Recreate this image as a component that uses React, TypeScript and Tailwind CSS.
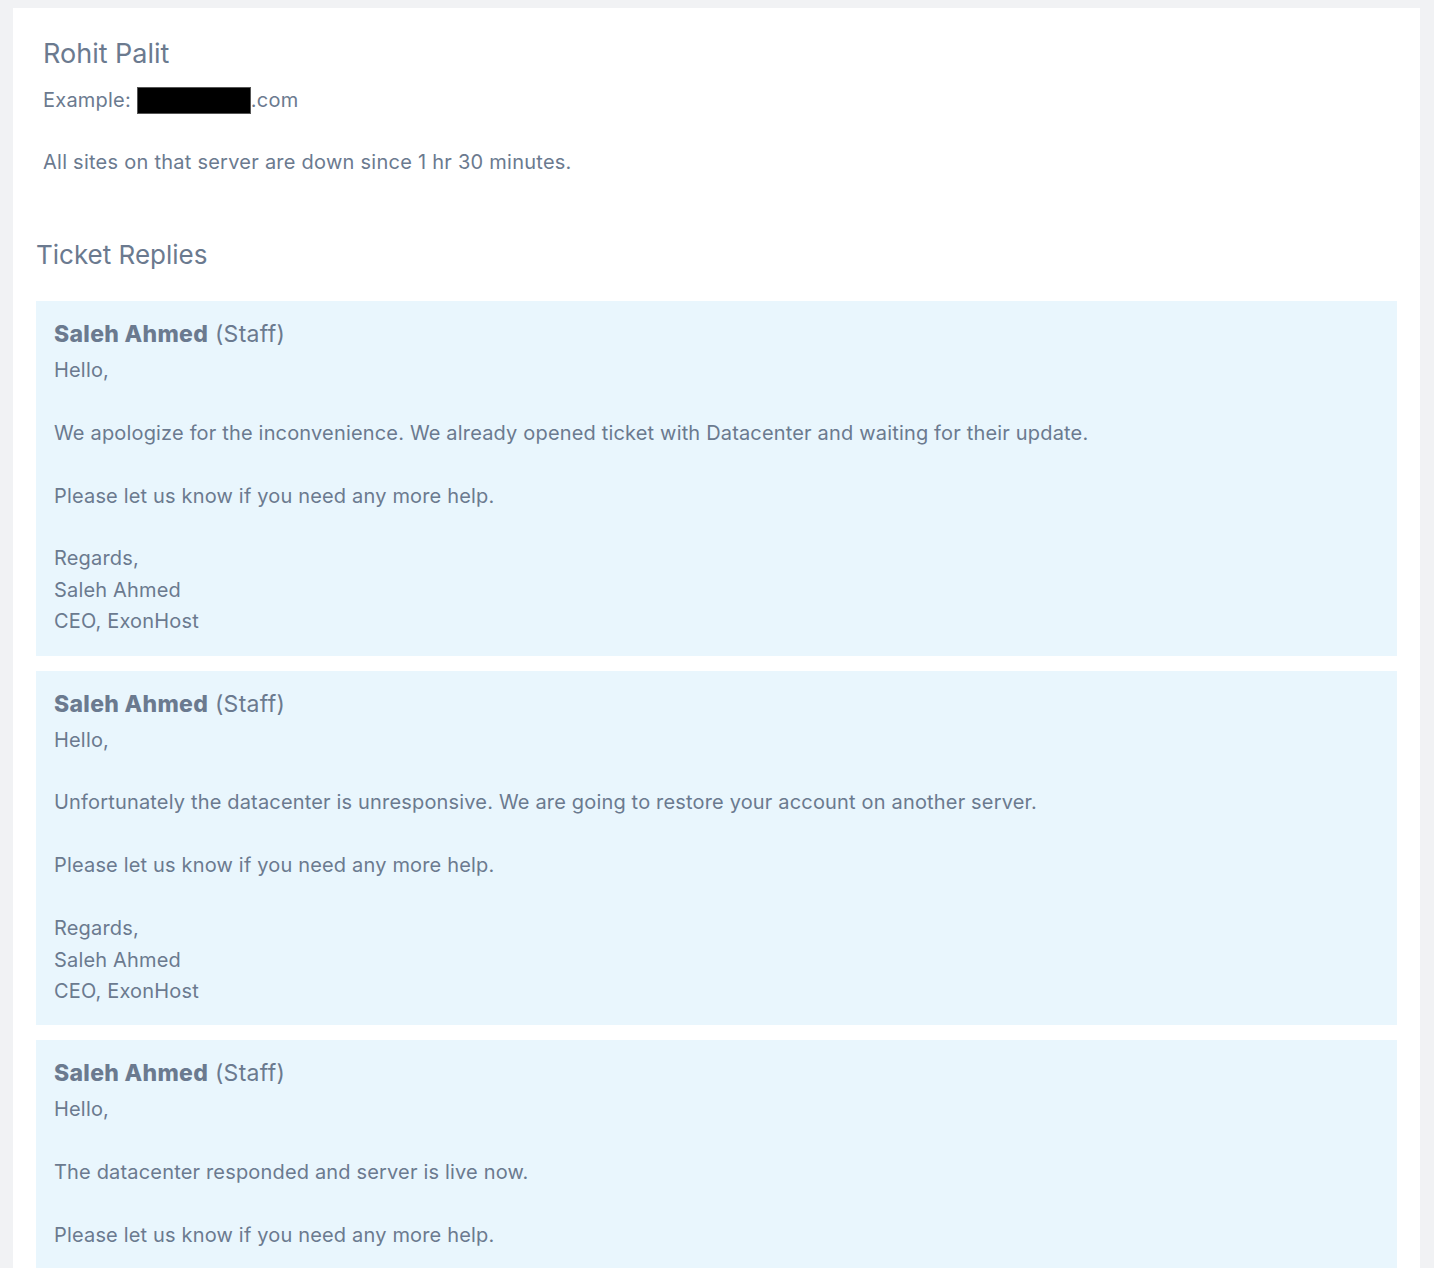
import React from "react";

interface Reply {
  author: string;
  role: string;
  body: string;
}

const signature = "Regards,\nSaleh Ahmed\nCEO, ExonHost";

const replies: Reply[] = [
  {
    author: "Saleh Ahmed",
    role: "Staff",
    body:
      "Hello,\n\nWe apologize for the inconvenience. We already opened ticket with Datacenter and waiting for their update.\n\nPlease let us know if you need any more help.\n\n" +
      signature,
  },
  {
    author: "Saleh Ahmed",
    role: "Staff",
    body:
      "Hello,\n\nUnfortunately the datacenter is unresponsive. We are going to restore your account on another server.\n\nPlease let us know if you need any more help.\n\n" +
      signature,
  },
  {
    author: "Saleh Ahmed",
    role: "Staff",
    body:
      "Hello,\n\nThe datacenter responded and server is live now.\n\nPlease let us know if you need any more help.\n\n" +
      signature,
  },
];

export default function App() {
  return (
    <div
      className="min-h-screen bg-[#f1f2f4] pl-[13px] pr-[14px] pt-2 text-[#6b7a8f]"
      style={{ fontFamily: "Inter, 'Noto Sans', sans-serif" }}
    >
      <div className="bg-white pb-6">
        {/* ticket header */}
        <div className="px-[30px] pt-[28px]">
          <h1 className="text-[27px] leading-[36px]">Rohit Palit</h1>
          <p className="mt-[13px] flex items-center text-[20px] leading-[31.5px] tracking-[0.22px]">
            Example:&nbsp;
            <span className="inline-block h-[27px] w-[114px] border border-[#555] bg-black" />
            .com
          </p>
          <p className="mt-[30px] text-[20px] leading-[31.5px] tracking-[0.25px]">
            All sites on that server are down since 1 hr 30 minutes.
          </p>
        </div>

        {/* replies */}
        <div className="mt-[59px] px-[23px]">
          <h2 className="text-[26px] leading-[36px]">Ticket Replies</h2>

          <div className="mt-[28px] flex flex-col gap-[15px]">
            {replies.map((reply, index) => (
              <div key={index} className="bg-[#e9f6fd] px-[18px] pb-[18px] pt-[15px]">
                <div className="text-[23px] leading-[36px] tracking-[0.3px]">
                  <span className="font-extrabold">{reply.author}</span> ({reply.role})
                </div>
                <p className="mt-[3px] whitespace-pre-line text-[20px] leading-[31.4px] tracking-[0.17px]">
                  {reply.body}
                </p>
              </div>
            ))}
          </div>
        </div>
      </div>
    </div>
  );
}
